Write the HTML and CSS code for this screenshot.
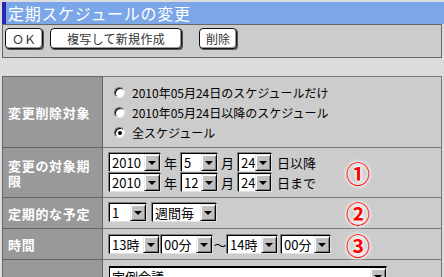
FILE: index.html
```html
<!DOCTYPE html>
<html lang="ja">
<head>
<meta charset="utf-8">
<title>定期スケジュールの変更</title>
<link rel="stylesheet" href="styles.css">
</head>
<body>
<div class="page">
  <div class="titlebar">
    <span class="stripe"></span>
    <h1 class="title">定期スケジュールの変更</h1>
  </div>
  <div class="toolbar">
    <button class="btn btn-ok" type="button">ＯＫ</button>
    <button class="btn btn-copy" type="button">複写して新規作成</button>
    <button class="btn btn-del" type="button">削除</button>
  </div>
  <table class="form">
    <tr class="row-target">
      <th>変更削除対象</th>
      <td>
        <div class="opt"><span class="radio"></span>2010年05月24日のスケジュールだけ</div>
        <div class="opt"><span class="radio"></span>2010年05月24日以降のスケジュール</div>
        <div class="opt"><span class="radio checked"></span>全スケジュール</div>
      </td>
    </tr>
    <tr class="row-period">
      <th>変更の対象期限</th>
      <td>
        <div class="cell">
          <div class="line">
            <span class="sel sel-y"><span class="val">2010</span><span class="arrow"></span></span><span class="unit">年</span>
            <span class="sel sel-m"><span class="val">5</span><span class="arrow"></span></span><span class="unit">月</span>
            <span class="sel sel-d"><span class="val">24</span><span class="arrow"></span></span><span class="unit unit-end">日以降</span>
          </div>
          <div class="line">
            <span class="sel sel-y"><span class="val">2010</span><span class="arrow"></span></span><span class="unit">年</span>
            <span class="sel sel-m"><span class="val">12</span><span class="arrow"></span></span><span class="unit">月</span>
            <span class="sel sel-d"><span class="val">24</span><span class="arrow"></span></span><span class="unit unit-end">日まで</span>
          </div>
          <span class="note">①</span>
        </div>
      </td>
    </tr>
    <tr class="row-repeat">
      <th>定期的な予定</th>
      <td>
        <div class="cell">
          <div class="line">
            <span class="sel sel-n"><span class="val">1</span><span class="arrow"></span></span>
            <span class="sel sel-w"><span class="val">週間毎</span><span class="arrow"></span></span>
          </div>
          <span class="note">②</span>
        </div>
      </td>
    </tr>
    <tr class="row-time">
      <th>時間</th>
      <td>
        <div class="cell">
          <div class="line">
            <span class="sel sel-h"><span class="val">13時</span><span class="arrow"></span></span>
            <span class="sel sel-min"><span class="val">00分</span><span class="arrow"></span></span>
            <span class="tilde">～</span>
            <span class="sel sel-h"><span class="val">14時</span><span class="arrow"></span></span>
            <span class="sel sel-min2"><span class="val">00分</span><span class="arrow"></span></span>
          </div>
          <span class="note">③</span>
        </div>
      </td>
    </tr>
    <tr class="row-subject">
      <th></th>
      <td>
        <div class="line">
          <span class="sel sel-subj"><span class="val">定例会議</span><span class="arrow"></span></span>
        </div>
      </td>
    </tr>
  </table>
</div>
</body>
</html>
```
FILE: styles.css
```css
html, body {
  margin: 0;
  padding: 0;
}
body {
  background: #dcdcdc;
  font-family: "Noto Sans CJK JP", "Noto Sans", sans-serif;
  color: #000;
  overflow: hidden;
}
.page {
  padding: 2px 2px 0 2px;
  width: 440px;
}
.titlebar {
  display: flex;
  align-items: stretch;
  height: 22px;
  margin-right: -2px;
  background: #7ba6e8;
}
.stripe {
  width: 4px;
  background: #2727b4;
}
.title {
  margin: 0 0 0 2px;
  font-size: 16px;
  font-weight: normal;
  letter-spacing: 0.7px;
  line-height: 22px;
  color: #fff;
}
.toolbar {
  box-sizing: border-box;
  height: 34px;
  border: 1px solid #666;
  background: #cccccc;
  padding: 3px 2px 0 2px;
  display: flex;
  align-items: flex-start;
}
.btn {
  box-sizing: border-box;
  height: 21px;
  padding: 0;
  border: 1px solid #111;
  border-radius: 4px;
  background: #fff;
  box-shadow: inset -1px -1px 0 #9a9a9a, 1px 1px 0 #555;
  font-family: "Noto Sans CJK JP", sans-serif;
  font-size: 12px;
  line-height: 19px;
  color: #333;
}
.btn-ok { width: 38px; }
.btn-copy { width: 132px; margin-left: 7px; letter-spacing: 0.3px; }
.btn-del { width: 38px; margin-left: 17px; }

.form {
  margin-top: 18px;
  width: 440px;
  border-collapse: collapse;
  border: 1px solid #666;
}
.form th {
  width: 90px;
  padding: 0 4px 0 5px;
  background: #999999;
  color: #fff;
  font-size: 13px;
  font-weight: bold;
  letter-spacing: 0.7px;
  line-height: 15px;
  text-align: left;
  vertical-align: middle;
  border: 1px solid #666;
}
.form td {
  background: #cccccc;
  padding: 5px 0 5px 6px;
  vertical-align: top;
  border: 1px solid #777;
}
.row-repeat td { padding: 5px 0 6px 6px; }
.row-time td { padding: 6px 0 5px 6px; }
.row-subject td { padding: 6px 0 20px 6px; }

.opt {
  display: flex;
  align-items: center;
  height: 20px;
  padding-left: 5px;
  font-size: 12px;
  white-space: nowrap;
}
.radio {
  box-sizing: border-box;
  width: 11px;
  height: 11px;
  margin-right: 7px;
  border-radius: 50%;
  background: #fff;
  border: 1px solid;
  border-color: #6a6a6a #e8e8e8 #e8e8e8 #6a6a6a;
  box-shadow: inset 1px 1px 0 #000;
  position: relative;
}
.radio.checked::after {
  content: "";
  position: absolute;
  left: 3px;
  top: 3px;
  width: 4px;
  height: 4px;
  border-radius: 50%;
  background: #000;
}

.cell {
  position: relative;
}
.line {
  display: flex;
  align-items: center;
  height: 19px;
}
.line + .line {
  margin-top: 1px;
}
.sel {
  box-sizing: border-box;
  display: inline-flex;
  align-items: stretch;
  height: 19px;
  background: #fff;
  border: 1px solid;
  border-color: #000 #e0e0e0 #e0e0e0 #000;
  box-shadow: -1px -1px 0 #808080;
}
.val {
  flex: 1;
  padding-left: 2px;
  font-size: 13px;
  line-height: 17px;
  white-space: nowrap;
  overflow: hidden;
}
.arrow {
  box-sizing: border-box;
  width: 16px;
  background: #c0c0c0;
  border: 1px solid;
  border-color: #e8e8e8 #000 #000 #e8e8e8;
  box-shadow: inset 1px 1px 0 #fff, inset -1px -1px 0 #808080;
  display: flex;
  align-items: center;
  justify-content: center;
}
.arrow::after {
  content: "";
  width: 0;
  height: 0;
  border-left: 4px solid transparent;
  border-right: 4px solid transparent;
  border-top: 4px solid #000;
  margin-top: 1px;
}
.sel-y { width: 52px; }
.sel-m { width: 37px; }
.sel-d { width: 34px; }
.sel-n { width: 38px; }
.sel-w { width: 65px; margin-left: 5px; }
.sel-h { width: 51px; }
.sel-min { width: 52px; margin-left: 1px; }
.sel-min2 { width: 50px; margin-left: 3px; }
.sel-subj {
  width: 278px;
  border-top: 2px solid #000;
  box-shadow: none;
}
.unit {
  font-size: 13px;
  line-height: 19px;
  margin: 0 4px 0 3px;
}
.unit-end {
  margin-left: 5px;
}
.tilde {
  width: 14px;
  font-size: 13px;
  line-height: 19px;
  text-align: center;
}
.note {
  position: absolute;
  left: 237px;
  top: 50%;
  transform: translateY(-50%);
  font-size: 24px;
  font-weight: bold;
  line-height: 24px;
  color: #ff0000;
  text-shadow: 0 0 2px #fff, 0 0 3px #fff, 0 0 4px #fff, 0 0 5px #fff;
}
```
